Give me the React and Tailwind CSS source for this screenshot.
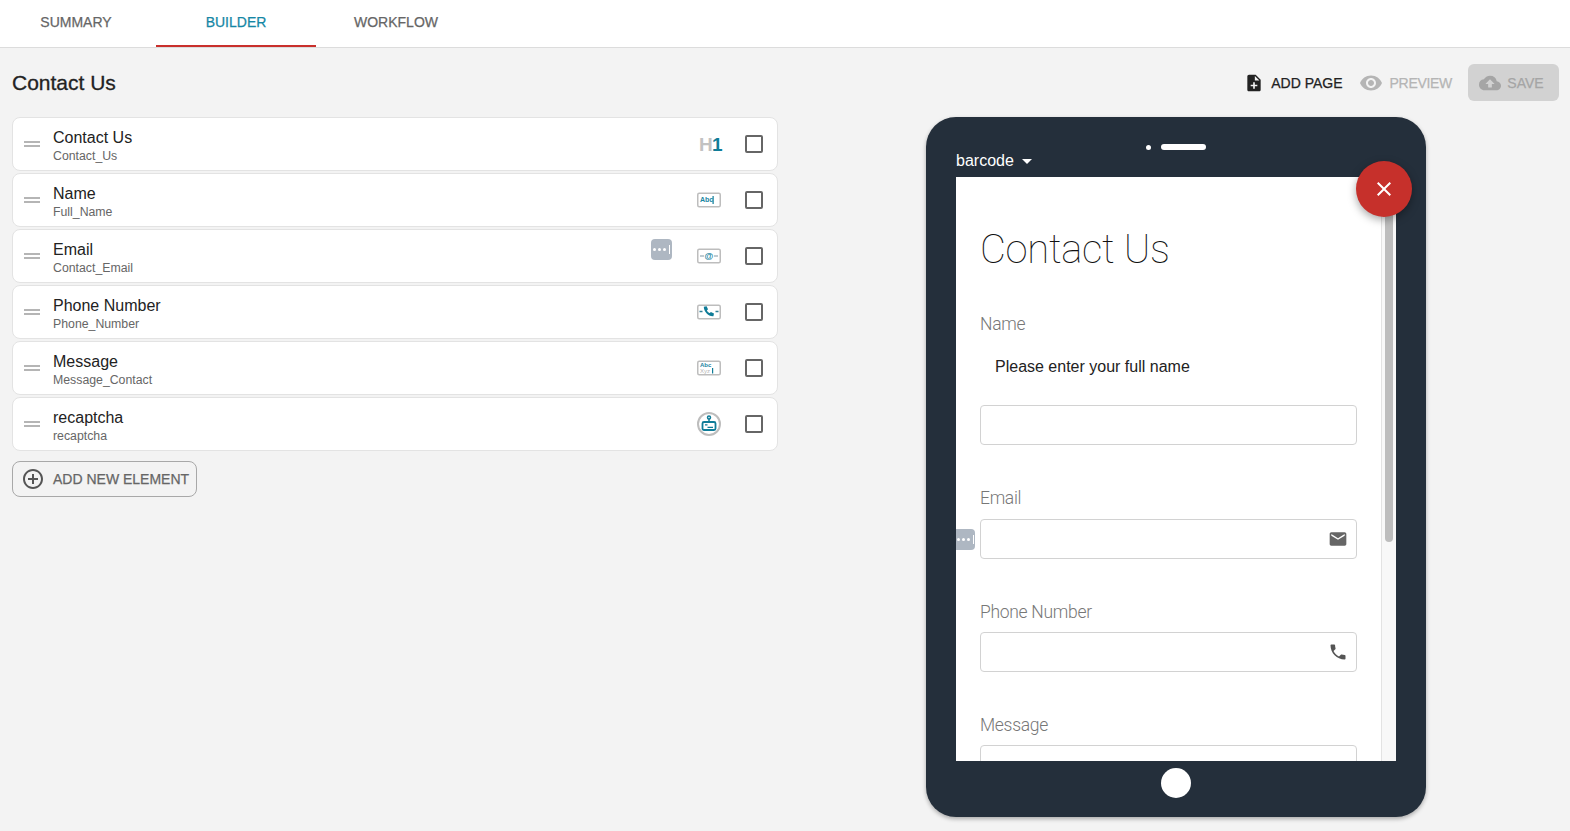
import React from 'react';
import { MdNoteAdd, MdVisibility, MdCloudUpload, MdEmail, MdPhone, MdClose, MdAddCircleOutline, MdArrowDropDown } from 'react-icons/md';

const SANS = "font-['Liberation_Sans',Arial,sans-serif]";
const MEDIUM = '[-webkit-text-stroke:0.25px_currentColor]';

// small builder icons
const FieldBox = ({ children }) => (
  <svg width="24" height="16" viewBox="0 0 24 16" className="translate-x-[1px]">
    <rect x="0.75" y="1.25" width="22.5" height="13.5" rx="1.5" fill="#fff" stroke="#bdbdbd" strokeWidth="1.5" />
    {children}
  </svg>
);

const H1Icon = () => (
  <div className="w-6 translate-x-[3px] text-[19px] font-bold leading-none tracking-[-0.8px]">
    <span className="text-[#c2c2c2]">H</span>
    <span className="text-[#0f7c98]">1</span>
  </div>
);

const TextIcon = () => (
  <FieldBox>
    <text x="3" y="10" fontSize="7" fontWeight="700" fill="#1b86a3" fontFamily="Liberation Sans, sans-serif">Abc</text>
    <rect x="15.500" y="4" width="1.200" height="8" fill="#0f7c98" />
  </FieldBox>
);

const EmailIcon = () => (
  <FieldBox>
    <path d="M3 8h4M17 8h4" stroke="#7f98a3" strokeWidth="1.200" />
    <text x="12" y="11" textAnchor="middle" fontSize="9" fontWeight="700" fill="#1b86a3" fontFamily="Liberation Sans, sans-serif">@</text>
  </FieldBox>
);

const PhoneIcon = () => (
  <FieldBox>
    <path d="M2.500 7.500h3M18.500 7.500h3" stroke="#2f7f96" strokeWidth="1.400" />
    <path d="M6.800 2.800l2.800-.6 1.400 3-1.100 1.200c.7 1.300 1.600 2.100 2.900 2.700l1.100-1.100 3.100 1.500-.6 2.700c-5 .4-9.600-4.400-9.600-9.400z" fill="#0f7c98" />
  </FieldBox>
);

const AreaIcon = () => (
  <FieldBox>
    <text x="3" y="6.500" fontSize="6" fontWeight="700" fill="#1b86a3" fontFamily="Liberation Sans, sans-serif">Abc</text>
    <text x="3" y="12.800" fontSize="6" fill="#b5b5b5" fontFamily="Liberation Sans, sans-serif">Xyz</text>
    <rect x="15" y="8" width="1.200" height="5.500" fill="#0f7c98" />
  </FieldBox>
);

const RobotIcon = () => (
  <svg width="24" height="24" viewBox="0 0 24 24" className="translate-x-[1px]">
    <circle cx="12" cy="12" r="11" fill="#fff" stroke="#bdbdbd" strokeWidth="2" />
    <circle cx="12" cy="5.500" r="1.500" fill="none" stroke="#0f7c98" strokeWidth="1.500" />
    <path d="M12 7v3" stroke="#0f7c98" strokeWidth="1.500" />
    <rect x="5.500" y="10" width="13" height="8" rx="1.500" fill="none" stroke="#0f7c98" strokeWidth="1.800" />
    <path d="M8 12.800h2.500M10.500 15.300h5.500" stroke="#0f7c98" strokeWidth="1.300" />
  </svg>
);

const PasswordBadge = ({ className }) => (
  <div className={`flex items-center justify-center gap-[2px] bg-[#aeb7c2] ${className}`}>
    <span className="h-[3px] w-[3px] rounded-full bg-white" />
    <span className="h-[3px] w-[3px] rounded-full bg-white" />
    <span className="h-[3px] w-[3px] rounded-full bg-white" />
    <span className="ml-[1px] h-[9px] w-[1px] bg-white" />
  </div>
);

const elements = [
  { id: 1, title: 'Contact Us', name: 'Contact_Us', icon: <H1Icon /> },
  { id: 2, title: 'Name', name: 'Full_Name', icon: <TextIcon /> },
  { id: 3, title: 'Email', name: 'Contact_Email', icon: <EmailIcon />, badge: true },
  { id: 4, title: 'Phone Number', name: 'Phone_Number', icon: <PhoneIcon /> },
  { id: 5, title: 'Message', name: 'Message_Contact', icon: <AreaIcon /> },
  { id: 6, title: 'recaptcha', name: 'recaptcha', icon: <RobotIcon /> },
];

const ElementRow = ({ item }) => (
  <div className="flex h-[54px] items-center rounded-lg border border-[#e3e3e3] bg-white pl-[11px] pr-[14px]">
    <div className="flex w-[16px] flex-col gap-[2px]">
      <span className="h-[2px] bg-[#b5b5b5]" />
      <span className="h-[2px] bg-[#b5b5b5]" />
    </div>
    <div className="ml-[13px] flex-1 pt-[3px]">
      <div className="text-base leading-[20px] text-[#222]">{item.title}</div>
      <div className="text-[12.3px] leading-[16px] text-[#666]">{item.name}</div>
    </div>
    {item.badge && <PasswordBadge className="mb-[13px] mr-[24px] h-[21px] w-[21px] rounded" />}
    <div className="flex w-[24px] items-center justify-center">{item.icon}</div>
    <div className="ml-[25px] h-[18px] w-[18px] rounded-[2px] border-2 border-[#666]" />
  </div>
);

const FormField = ({ label, icon, topGap, inputGap, badge }) => (
  <div className={topGap}>
    <div className="font-['Roboto',sans-serif] text-[17.5px] font-light leading-6 tracking-[-0.3px] text-[#777]">{label}</div>
    <div className={`relative flex h-10 items-center justify-end rounded border border-[#d2d2d2] bg-white pr-[8px] ${inputGap}`}>
      {badge && <PasswordBadge className="absolute -left-[25px] top-[9px] h-[21px] w-[19px] rounded-r" />}
      {icon}
    </div>
  </div>
);

export default function App() {
  return (
    <div className={`${SANS} h-screen overflow-hidden bg-[#f3f3f3]`}>
      <nav className={`flex h-[48px] border-b border-[#dcdcdc] bg-white text-sm ${MEDIUM}`}>
        <button className="mr-1 w-[152px] pb-[3px] text-[#666]">SUMMARY</button>
        <button className="h-[47px] w-[160px] border-b-[2px] border-[#c9302c] pb-[2px] text-[#1587a5]">BUILDER</button>
        <button className="w-[160px] pb-[3px] text-[#666]">WORKFLOW</button>
      </nav>

      <div className="flex items-center justify-between pb-4 pl-3 pr-[11px] pt-4">
        <h1 className="pt-[1px] text-[21px] leading-[36px] text-[#222] [-webkit-text-stroke:0.3px_#222]">Contact Us</h1>
        <div className={`flex items-center text-sm ${MEDIUM}`}>
          <button className="flex items-center text-[#222]">
            <MdNoteAdd size={20} className="mr-[7px]" />
            ADD PAGE
          </button>
          <button className="ml-[16px] flex items-center tracking-[-0.3px] text-[#b5b5b5]">
            <MdVisibility size={24} className="mr-[7px]" />
            PREVIEW
          </button>
          <button className="ml-[16px] flex h-[37px] w-[91px] items-center justify-center rounded-md bg-[#d2d2d2] pr-[4px] text-[#a5a5a5]">
            <MdCloudUpload size={22} className="mr-[6px]" />
            SAVE
          </button>
        </div>
      </div>

      <div className="flex items-start pl-3">
        <div className="w-[766px]">
          <div className="flex flex-col gap-[2px]">
            {elements.map((item) => (
              <ElementRow key={item.id} item={item} />
            ))}
          </div>
          <button className={`mt-[10px] flex h-[36px] w-[185px] items-center rounded-lg border border-[#a8a8a8] pl-[8px] text-sm text-[#666] ${MEDIUM}`}>
            <MdAddCircleOutline size={24} className="mr-[8px] text-[#555]" />
            ADD NEW ELEMENT
          </button>
        </div>

        {/* tablet preview */}
        <div className="relative ml-[148px] flex h-[700px] w-[500px] flex-col rounded-[30px] bg-[#242f3b] shadow-[0_2px_4px_rgba(0,0,0,0.3)]">
          <div className="h-[60px] px-[30px] pt-[27px]">
            <div className="flex h-[6px] items-center justify-center gap-[10px]">
              <span className="h-[5px] w-[5px] rounded-full bg-white" />
              <span className="h-[6px] w-[45px] rounded-full bg-white" />
            </div>
            <div className="-mt-[1px] flex items-center text-base leading-5 text-white">
              barcode
              <MdArrowDropDown size={24} className="ml-[1px]" />
            </div>
          </div>

          <div className="mx-[30px] flex h-[584px] overflow-hidden bg-white">
            <div className="flex-1 px-6 pt-[49px]">
              <h2 className="font-['Roboto',sans-serif] text-[40px] font-thin leading-[48px] tracking-[-0.3px] text-[#111]">Contact Us</h2>
              <div className="mt-[38px] font-['Roboto',sans-serif] text-[17.5px] font-light leading-6 tracking-[-0.3px] text-[#777]">Name</div>
              <div className="mt-[19px] pl-[15px] text-base leading-6 text-[#222]">Please enter your full name</div>
              <div className="mt-[26px] h-10 rounded border border-[#d2d2d2]" />
              <FormField label="Email" topGap="mt-[41px]" inputGap="mt-[9px]" badge icon={<MdEmail size={20} className="text-[#666]" />} />
              <FormField label="Phone Number" topGap="mt-[41px]" inputGap="mt-[8px]" icon={<MdPhone size={20} className="text-[#555]" />} />
              <FormField label="Message" topGap="mt-[41px]" inputGap="mt-[8px]" />
            </div>
            <div className="w-[15px] border-l border-[#e3e3e3] bg-[#f8f8f8] pl-[3px]">
              <div className="h-[365px] w-2 rounded-b bg-[#bdbdbd]" />
            </div>
          </div>

          <div className="flex flex-1 items-center justify-center pb-[12px]">
            <span className="h-[30px] w-[30px] rounded-full bg-white" />
          </div>

          <button className="absolute left-[430px] top-[44px] flex h-14 w-14 items-center justify-center rounded-full bg-[#c6302b] text-white shadow-[0_3px_8px_rgba(0,0,0,0.35)]">
            <MdClose size={24} />
          </button>
        </div>
      </div>
    </div>
  );
}
